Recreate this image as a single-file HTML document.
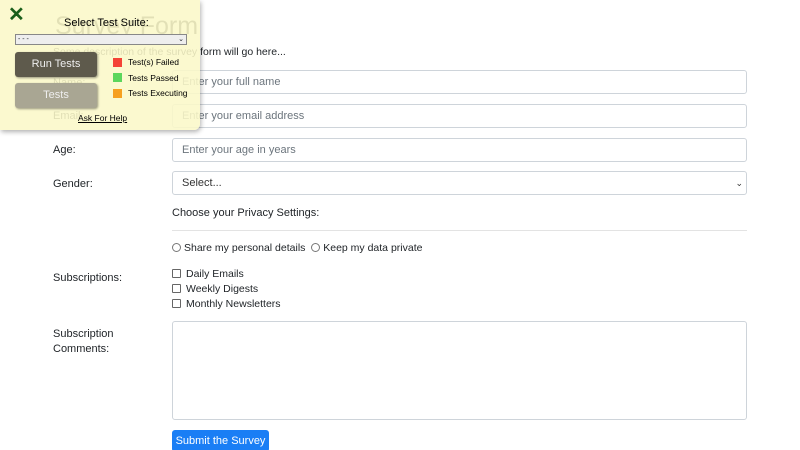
<!DOCTYPE html>
<html><head><style>
html,body{margin:0;width:800px;height:450px;overflow:hidden}
body{background:#fff;font-family:"Liberation Sans",sans-serif;color:#212529;position:relative;font-size:11px}
.a{position:absolute}
.in{position:absolute;left:172px;width:564px;height:22px;border:1px solid #ced4da;border-radius:3px;color:#6c757d;font-size:11px;line-height:22px;padding-left:9px}
.lbl{position:absolute;left:53px;font-size:11px}
.cb{display:inline-block;width:7px;height:7px;border:1px solid #666;border-radius:1px;margin-right:5px;vertical-align:-1px}
.rd{display:inline-block;width:7px;height:7px;border:1px solid #777;border-radius:50%;margin-right:3px;vertical-align:-1px}
</style></head><body>
<div class="a" style="left:55px;top:12px;font-size:25px;color:#333">Survey Form</div>
<div class="a" style="left:53px;top:46px;font-size:10.5px">Some description of the survey form will go here...</div>
<div class="lbl" style="top:77px">Name:</div>
<div class="in" style="top:70px">Enter your full name</div>
<div class="lbl" style="top:110px">Email:</div>
<div class="in" style="top:104px">Enter your email address</div>
<div class="lbl" style="top:144px">Age:</div>
<div class="in" style="top:138px">Enter your age in years</div>
<div class="lbl" style="top:178px">Gender:</div>
<div class="in" style="top:171px;color:#333">Select...<span style="position:absolute;right:3px;font-size:9px">&#8964;</span></div>
<div class="a" style="left:172px;top:207px">Choose your Privacy Settings:</div>
<div class="a" style="left:172px;top:230px;width:575px;border-top:1px solid #e3e3e3"></div>
<div class="a" style="left:172px;top:242px;font-size:10.5px"><span class="rd"></span>Share my personal details &nbsp;<span class="rd"></span>Keep my data private</div>
<div class="lbl" style="top:272px">Subscriptions:</div>
<div class="a" style="left:172px;top:267px;line-height:15px;font-size:10.5px"><span class="cb"></span>Daily Emails<br><span class="cb"></span>Weekly Digests<br><span class="cb"></span>Monthly Newsletters</div>
<div class="lbl" style="top:327px;line-height:15px">Subscription<br>Comments:</div>
<div class="a" style="left:172px;top:321px;width:573px;height:97px;border:1px solid #ced4da;border-radius:3px"></div>
<div class="a" style="left:172px;top:430px;width:97px;height:22px;background:#1a7ef5;border-radius:3px;color:#fff;line-height:22px;text-align:center">Submit the Survey</div>

<div class="a" style="left:0;top:0;width:200px;height:130px;background:rgba(251,248,200,.88);border-radius:0 0 6px 0;box-shadow:1px 2px 5px rgba(0,0,0,.3)">
<div class="a" style="left:8px;top:2px;font-size:20px;font-weight:bold;color:#1a5f1a">✕</div>
<div class="a" style="left:64px;top:17px;font-size:11px;color:#000">Select Test Suite:</div>
<div class="a" style="left:15px;top:34px;width:168px;height:9px;border:1px solid #888;background:#eee;font-size:7px;line-height:9px;padding-left:2px">- - -<span style="position:absolute;right:2px">&#8964;</span></div>
<div class="a" style="left:15px;top:52px;width:82px;height:25px;background:#5e5a4c;border-radius:3px;color:#eee;text-align:center;line-height:25px;box-shadow:1px 1px 2px rgba(0,0,0,.4)">Run Tests</div>
<div class="a" style="left:15px;top:83px;width:82px;height:25px;background:#a9a693;border-radius:3px;color:#eee;text-align:center;line-height:25px;box-shadow:1px 1px 2px rgba(0,0,0,.4)">Tests</div>
<div class="a" style="left:113px;top:58px;width:9px;height:9px;background:#f44336"></div>
<div class="a" style="left:128px;top:57px;font-size:8.5px;color:#000">Test(s) Failed</div>
<div class="a" style="left:113px;top:73px;width:9px;height:9px;background:#5cd65c"></div>
<div class="a" style="left:128px;top:73px;font-size:8.5px;color:#000">Tests Passed</div>
<div class="a" style="left:113px;top:89px;width:9px;height:9px;background:#f6a020"></div>
<div class="a" style="left:128px;top:88px;font-size:8.5px;color:#000">Tests Executing</div>
<div class="a" style="left:78px;top:113px;font-size:8.5px;color:#000;text-decoration:underline">Ask For Help</div>
</div>
</body></html>
